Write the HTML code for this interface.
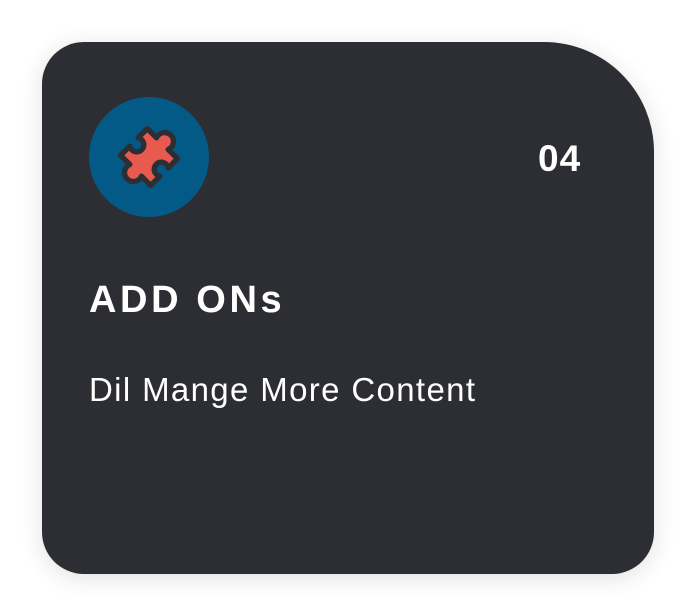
<!DOCTYPE html>
<html><head><style>
html,body{margin:0;padding:0;background:#fff;width:696px;height:616px;overflow:hidden}
.card{position:absolute;left:42px;top:42px;width:612px;height:532px;background:#2d2e33;border-radius:42px 110px 42px 42px;box-shadow:0 4px 24px rgba(0,0,0,0.12)}
.circ{position:absolute;left:89px;top:97px;width:120px;height:120px;border-radius:50%;background:#035a86}
.num{position:absolute;left:538px;top:138px;color:#fff;font:bold 37px "Liberation Sans",sans-serif;letter-spacing:1px}
.t{position:absolute;left:89px;top:279px;color:#fff;font:bold 38px "Liberation Sans",sans-serif;letter-spacing:3.6px}
.s{position:absolute;left:89px;top:371px;color:#fff;font:33px "Liberation Sans",sans-serif;letter-spacing:1.35px}
</style></head><body>
<div class="card"></div>
<div class="circ"></div>
<svg style="position:absolute;left:89px;top:97px" width="120" height="120" viewBox="0 0 120 120">
<g transform="translate(60 60) scale(1.18) rotate(45) translate(-60 -60)">
<path d="M42 44 H53 a7.5 7.5 0 1 1 14 0 H78 V55 a6 6 0 1 0 0 10 V76 H67 a7.5 7.5 0 1 1 -14 0 H42 V65 a6 6 0 1 0 0 -10 Z" fill="#e85a4f" stroke="#2d2e33" stroke-width="4.5" stroke-linejoin="round"/>
</g>
</svg>
<div class="num">04</div>
<div class="t">ADD ONs</div>
<div class="s">Dil Mange More Content</div>
</body></html>
